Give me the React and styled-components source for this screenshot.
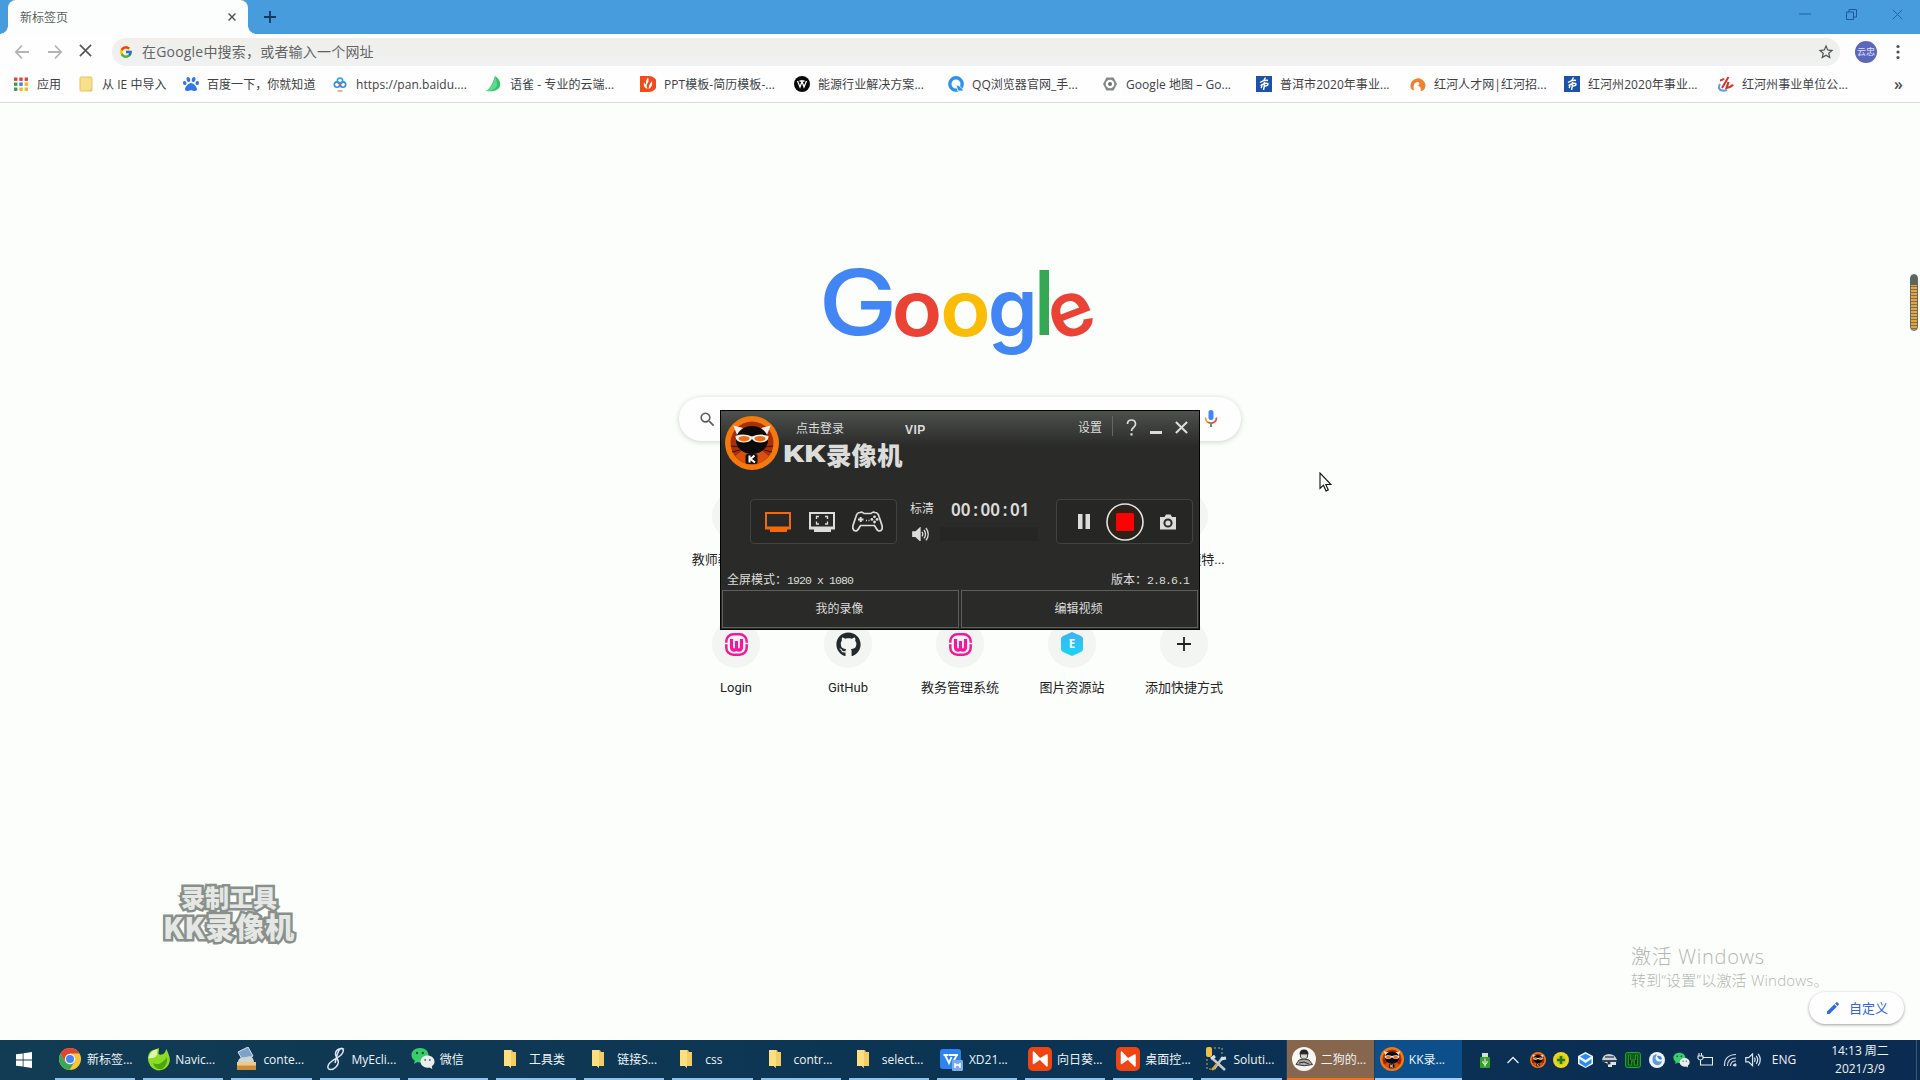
import React from "react";
import styled, { createGlobalStyle } from "styled-components";
import { FcGoogle } from "react-icons/fc";
import { FaGithub, FaPaw } from "react-icons/fa";
import { MdEdit, MdSearch, MdStarBorder } from "react-icons/md";

const Global = createGlobalStyle`
  * { box-sizing: border-box; }
  html, body { margin: 0; padding: 0; background: #fcfefb; overflow: hidden; }
  body { font-family: "Open Sans", "Noto Sans CJK SC", sans-serif; }
  svg { display: block; flex: none; }
`;

const Desktop = styled.div`
  position: relative;
  width: 1920px;
  height: 1080px;
  display: flex;
  flex-direction: column;
  background: #fcfefb;
  overflow: hidden;
`;

/* ---------- browser chrome ---------- */

const TabStrip = styled.header`
  height: 34px;
  background: #479cde;
  display: flex;
  align-items: center;
  padding-left: 8px;
`;
const Tab = styled.div`
  position: relative;
  width: 240px;
  height: 34px;
  border-radius: 8px 8px 0 0;
  background: #fcfefd;
  display: flex;
  align-items: center;
  justify-content: space-between;
  padding: 0 12px 0 12px;
  font-size: 12px;
  color: #5b5e60;
  &::before, &::after {
    content: "";
    position: absolute;
    bottom: 0;
    width: 8px;
    height: 8px;
  }
  &::before { left: -8px; background: radial-gradient(circle at 0 0, #479cde 7.5px, #fcfefd 8px); }
  &::after { right: -8px; background: radial-gradient(circle at 100% 0, #479cde 7.5px, #fcfefd 8px); }
`;
const NewTab = styled.div`
  margin-left: 16px;
  margin-top: -1px;
`;
const WindowControls = styled.div`
  margin-left: auto;
  margin-right: 17px;
  margin-bottom: 6px;
  width: 104px;
  display: flex;
  justify-content: space-between;
  align-items: center;
`;
const Toolbar = styled.div`
  height: 36px;
  display: flex;
  align-items: center;
  padding: 0 20px 0 14px;
  background: #fdfefd;
`;
const NavButtons = styled.div`
  display: flex;
  gap: 16.5px;
  width: 98px;
`;
const Omnibox = styled.div`
  flex: 1;
  height: 28px;
  border-radius: 14px;
  background: linear-gradient(#f1efec, #eff0ed 40%, #f0f1f2);
  display: flex;
  align-items: center;
  padding: 0 5px 0 7px;
  font-size: 14px;
  line-height: 20px;
  color: #626466;
`;
const OmniText = styled.span`
  flex: 1;
  margin-left: 9px;
  letter-spacing: 0.2px;
`;
const Avatar = styled.div`
  width: 22px;
  height: 22px;
  margin: 0 19px 0 15px;
  border-radius: 50%;
  background: #5c66ba;
  color: #dfe2f8;
  font-size: 9px;
  line-height: 22px;
  text-align: center;
`;
const Bookmarks = styled.nav`
  height: 33px;
  padding: 0 17px 4px 13px;
  border-bottom: 1px solid #d9dcda;
  display: flex;
  align-items: center;
  background: #fdfefd;
`;
const Bookmark = styled.div`
  width: ${(p) => p.$w || 154}px;
  display: flex;
  align-items: center;
  gap: 8px;
  font-size: 12px;
  line-height: 18px;
  color: #3d4145;
  white-space: nowrap;
`;
const BookmarkText = styled.span`
  padding-top: 2px;
  letter-spacing: 0.05px;
`;
const More = styled.span`
  margin-left: auto;
  font: 600 16px/18px "Open Sans", sans-serif;
  color: #4c4f52;
`;

/* ---------- new tab page ---------- */

const Page = styled.main`
  flex: 1;
  display: flex;
  flex-direction: column;
  align-items: center;
`;
const LogoArea = styled.div`
  height: 294px;
  padding-top: 127px;
`;
const SearchBox = styled.div`
  width: 562px;
  height: 44px;
  border-radius: 22px;
  background: #fdfefd;
  box-shadow: 0 1px 5px rgba(60, 64, 67, 0.24);
  display: flex;
  align-items: center;
  justify-content: space-between;
  padding: 0 23px 0 19px;
`;
const Shortcuts = styled.div`
  margin-top: 51px;
  display: grid;
  grid-template-columns: repeat(5, 112px);
  grid-auto-rows: 128px;
`;
const Shortcut = styled.div`
  display: flex;
  flex-direction: column;
  align-items: center;
`;
const Tile = styled.div`
  width: 48px;
  height: 48px;
  border-radius: 50%;
  background: #f3f5f3;
  display: flex;
  align-items: center;
  justify-content: center;
`;
const Label = styled.div`
  margin-top: 10px;
  height: 20px;
  padding-left: ${(p) => p.$shift || 0}px;
  font: 13px/20px Roboto, "Noto Sans CJK SC", sans-serif;
  color: #222426;
  white-space: nowrap;
`;
const Customize = styled.div`
  position: absolute;
  left: 1809px;
  top: 992px;
  width: 95px;
  height: 32px;
  border-radius: 16px;
  background: #fdfefd;
  box-shadow: 0 1px 3px rgba(40, 44, 47, 0.45);
  display: flex;
  align-items: center;
  gap: 8px;
  padding-left: 16px;
  font-size: 13px;
  line-height: 20px;
  color: #2f66dc;
`;
const ActivateNote = styled.div`
  position: absolute;
  left: 1631px;
  top: 944px;
  color: #b4b6b4;
  font-weight: 300;
  white-space: nowrap;
`;
const NoteTitle = styled.div`
  font-size: 20px;
  line-height: 26px;
  letter-spacing: 0.7px;
`;
const NoteText = styled.div`
  font-size: 15px;
  line-height: 21px;
  letter-spacing: 0.2px;
`;
const Watermark = styled.div`
  position: absolute;
  left: 159px;
  top: 882px;
  width: 140px;
  display: flex;
  flex-direction: column;
  align-items: center;
  font-family: "Noto Sans CJK SC", sans-serif;
  font-weight: 900;
  color: #e5e7e5;
  -webkit-text-stroke: 5px #89908b;
  stroke-linejoin: round;
  paint-order: stroke fill;
  white-space: nowrap;
`;
const MarkLine = styled.div`
  font-size: ${(p) => p.$size}px;
  line-height: ${(p) => p.$lh}px;
  letter-spacing: ${(p) => p.$ls || 0}px;
`;
const Gauge = styled.div`
  position: absolute;
  left: 1910px;
  top: 274px;
  width: 8px;
  height: 57px;
  border-radius: 4px;
  border: 1.5px solid #626a62;
  background: linear-gradient(#5c665e 10px, transparent 10px),
    repeating-linear-gradient(#e8a33c 0 2px, #79705a 2px 3px);
`;
const Cursor = styled.svg`
  position: absolute;
  left: 1319px;
  top: 472px;
`;

/* ---------- recorder window ---------- */

const Recorder = styled.section`
  position: absolute;
  left: 720px;
  top: 410px;
  width: 480px;
  height: 220px;
  border: 1px solid #030403;
  background: linear-gradient(#4e504e, #3f413f 14px, #2a2b29 36px);
  color: #dcdddb;
  font: 12px/16px "Liberation Mono", "Noto Sans CJK SC", monospace;
  display: flex;
  flex-direction: column;
`;
const RecHeader = styled.div`
  height: 88px;
  display: flex;
  padding: 5px 11px 0 4px;
`;
const HeaderMain = styled.div`
  flex: 1;
  padding: 6px 0 0 4px;
`;
const HeaderTop = styled.div`
  display: flex;
  height: 16px;
  padding-left: 13px;
`;
const Vip = styled.span`
  margin-left: 61px;
  font: bold 12px/17px "Liberation Sans", sans-serif;
  letter-spacing: 0.4px;
`;
const Brand = styled.div`
  height: 30px;
  margin-top: 1px;
  display: flex;
  align-items: center;
  font: 900 25.500px/30px "Noto Sans CJK SC", sans-serif;
  white-space: nowrap;
`;
const BrandKK = styled.span`
  font-family: Roboto, sans-serif;
  font-weight: 900;
  font-size: 24px;
  display: inline-block;
  transform: scaleX(1.38);
  transform-origin: left;
  width: 43px;
`;
const HeaderTools = styled.div`
  display: flex;
  height: 24px;
  align-items: center;
`;
const ToolText = styled.span`
  padding-top: 2px;
`;
const Divider = styled.i`
  width: 1px;
  height: 20px;
  background: #656765;
  margin: 0 13px 4px 10px;
`;
const HeaderIcons = styled.div`
  display: flex;
  align-items: center;
  gap: 13px;
  padding-bottom: 2px;
`;
const Controls = styled.div`
  height: 45px;
  padding: 0 5px 0 29px;
  display: flex;
`;
const ModeBox = styled.div`
  width: ${(p) => p.$w}px;
  border: 1px solid #41433f;
  border-radius: 4px;
  background: #262725;
  display: flex;
  align-items: center;
  justify-content: space-between;
  padding: ${(p) => p.$pad};
`;
const Status = styled.div`
  width: 159px;
  padding: 1px 0 1px 13px;
  display: flex;
  flex-direction: column;
  justify-content: space-between;
`;
const StatusRow = styled.div`
  display: flex;
  align-items: center;
  height: ${(p) => p.$h}px;
  padding-left: ${(p) => p.$indent || 0}px;
`;
const Timer = styled.span`
  margin-left: 17px;
  font: 600 17px/20px "Noto Sans", sans-serif;
  letter-spacing: 0.05px;
`;
const Colon = styled.span`
  margin: 0 2.600px;
`;
const Level = styled.div`
  width: 98px;
  height: 14px;
  margin-left: 11px;
  background: #262725;
`;
const Info = styled.div`
  margin-top: 29px;
  height: 17px;
  display: flex;
  justify-content: space-between;
  padding: 0 10px 0 6px;
`;
const Mono = styled.span`
  font-size: 11.500px;
  letter-spacing: -0.9px;
`;
const RecButtons = styled.div`
  margin: 0 1px 1px;
  flex: 1;
  display: flex;
  gap: 2px;
`;
const RecButton = styled.div`
  flex: 1;
  border: 1px solid #5d5f5c;
  display: flex;
  align-items: center;
  justify-content: center;
  padding: 2px 2px 0 0;
`;

/* ---------- taskbar ---------- */

const Taskbar = styled.footer`
  height: 40px;
  display: flex;
  background: linear-gradient(90deg, #123b54, #0c3653 40%, #0a3054 75%, #0b2b50);
  color: #eef4f8;
  font-size: 12px;
  line-height: 16px;
`;
const Start = styled.div`
  width: 51px;
  display: flex;
  align-items: center;
  padding-left: 16px;
`;
const Task = styled.div`
  width: 88.200px;
  padding: ${(p) => (p.$bg ? "0 0 0 3px" : "0 4px")};
  background: ${(p) => p.$bg || "transparent"};
  border-left: ${(p) => (p.$bg ? "1px solid #14416b" : "0")};
`;
const TaskInner = styled.div`
  height: 40px;
  display: flex;
  align-items: center;
  padding-left: 3px;
  border-bottom: 2px solid ${(p) => p.$line || "#8fc3ea"};
  ${(p) => p.$wide && "margin-left: -3px; padding-left: 5px;"}
  white-space: nowrap;
`;
const TaskIcon = styled.div`
  width: 24px;
  display: flex;
  justify-content: center;
  padding-right: ${(p) => (p.$folder ? 2 : 0)}px;
`;
const TaskText = styled.span`
  margin-left: ${(p) => (p.$folder ? 6 : 5)}px;
  padding-top: 2px;
`;
const Tray = styled.div`
  flex: 1;
  display: flex;
  align-items: center;
  padding-left: 10px;
`;
const TraySlot = styled.div`
  width: ${(p) => p.$w || 24}px;
  display: flex;
  justify-content: center;
`;
const Clock = styled.div`
  margin-left: 21px;
  width: 68px;
  text-align: center;
  line-height: 18px;
`;
const TrayEnd = styled.i`
  width: 1px;
  height: 40px;
  margin-left: auto;
  margin-right: 3px;
  background: #3c5875;
`;

/* ---------- drawings ---------- */

const Cross = ({ s, c, w = 1.5 }) => (
  <svg width={s} height={s} viewBox="0 0 10 10" stroke={c} strokeWidth={w} fill="none">
    <path d="M.7.7l8.6 8.6M9.3.7L.7 9.3" />
  </svg>
);
const Arrow = ({ flip }) => (
  <svg width="16" height="16" viewBox="0 0 16 16" fill="none" stroke="#b3b5b5" strokeWidth="1.8">
    <path d={flip ? "M1 8h13M8 1.500L14.200 8 8 14.500" : "M15 8H2M8 1.500L1.800 8 8 14.500"} />
  </svg>
);
const Folder = () => (
  <svg width="14" height="20" viewBox="0 0 14 20">
    <path d="M1 1h8l1 2h3v14H1z" fill="#e5b84c" />
    <path d="M1 1h7v18l-2-2H1z" fill="#fbdf82" />
    <path d="M8 3h5v14H6l2 2z" fill="#f3cd62" />
  </svg>
);
const appColors = ["#e3423a", "#e3423a", "#e3423a", "#3a9d54", "#3b7fe0", "#f3b32b", "#3a9d54", "#f3b32b", "#f3b32b"];
const AppsIcon = () => (
  <svg width="16" height="16" viewBox="0 0 16 16">
    {appColors.map((c, i) => (
      <rect key={i} x={1 + (i % 3) * 5.3} y={1.5 + Math.floor(i / 3) * 5} width="3.4" height="3.4" fill={c} />
    ))}
  </svg>
);
const YellowFolder = () => (
  <svg width="16" height="16" viewBox="0 0 16 16">
    <rect x="2" y="1" width="12" height="14" rx="1" fill="#f8df8b" stroke="#e6c562" />
    <path d="M11 15l3-3v3z" fill="#e6c562" />
  </svg>
);
const PanIcon = () => (
  <svg width="16" height="16" viewBox="0 0 16 16" fill="none" strokeWidth="1.6">
    <circle cx="8" cy="4.800" r="2.700" stroke="#34a8f0" />
    <circle cx="5" cy="8.600" r="2.700" stroke="#2f8fe8" />
    <circle cx="11" cy="8.600" r="2.700" stroke="#2f8fe8" />
    <path d="M6.500 7l2.800 2.600" stroke="#e6574e" />
    <path d="M5.500 15h5" stroke="#e6574e" strokeWidth="1" />
  </svg>
);
const LeafIcon = () => (
  <svg width="16" height="16" viewBox="0 0 16 16">
    <path d="M9 0c3 2 6 5 5 10-1 4-6 6-14 5C5 12 7 6 9 0z" fill="#35c36a" />
    <path d="M9 0c-1 7-4 12-9 15 6 0 10-2 11-6 0-3-1-6-2-9z" fill="#5fd98a" />
  </svg>
);
const PptIcon = () => (
  <svg width="16" height="16" viewBox="0 0 16 16">
    <path d="M0 0h9a8 8 0 010 16H0z" fill="#f14a1f" />
    <path d="M8 1.500q1.500 4-1 6.500-1 2 .5 5Q3 11.500 4 6q.8 2 2 2.500Q5.500 4 8 1.500zM12 5q1 6-3.500 8Q9 8 12 5z" fill="#fff" />
  </svg>
);
const BlackW = () => (
  <svg width="16" height="16" viewBox="0 0 16 16">
    <circle cx="8" cy="8" r="8" fill="#090909" />
    <path d="M3.500 5l2.500 6 2-5.500 2 5.500 2.500-6M5.500 5h5" fill="none" stroke="#fff" strokeWidth="1.300" />
  </svg>
);
const QQIcon = () => (
  <svg width="16" height="16" viewBox="0 0 16 16">
    <circle cx="8" cy="8" r="6.200" fill="none" stroke="#2e93ef" strokeWidth="3.400" />
    <path d="M8 9c3 0 5 2 8 6h-6z" fill="#2e93ef" stroke="#fff" strokeWidth=".8" />
  </svg>
);
const MapIcon = () => (
  <svg width="16" height="16" viewBox="0 0 16 16">
    <path d="M4.500 1.500h7L15 8l-3.500 6.500h-7L1 8z" fill="#858887" />
    <circle cx="8" cy="8" r="4.300" fill="#fff" />
    <circle cx="8" cy="8" r="2" fill="#6f7271" />
  </svg>
);
const ExamIcon = () => (
  <svg width="16" height="16" viewBox="0 0 16 16" fill="none" stroke="#fff" strokeWidth="1.400">
    <rect width="16" height="16" fill="#1c53a8" stroke="none" />
    <path d="M9.500 1.500L7.500 5M4 6.500q5-3 8-2M4.500 9.500q6-3.500 7.500-1.500 0 2-3 2M8.500 6q0 5-1 8M6 8q0 3-1 4" />
  </svg>
);
const TalentIcon = () => (
  <svg width="16" height="16" viewBox="0 0 16 16">
    <path d="M1 12.500A7.500 7.500 0 1115.500 10q-.5 3-2.500 4.500L10.500 15c1-3-.5-5-3.500-6 3 0 3-2 1-3-4 0-5 4-4 8.500Q1.500 14 1 12.500z" fill="#f0802f" />
  </svg>
);
const RedLogo = () => (
  <svg width="16" height="16" viewBox="0 0 16 16" fill="none" strokeWidth="2">
    <path d="M2 8c-3 5 1 8 7 6" stroke="#55a4e0" />
    <path d="M10.500 1L4 12M2 4.500Q5 4 6 2.500" stroke="#d93129" />
    <path d="M10.500 6L8.500 12q5-1 6.500-3.500" stroke="#d93129" strokeWidth="2.200" />
  </svg>
);
const GoogleMark = () => {
  const f = { fontFamily: "Inter, sans-serif", fontWeight: 500 };
  const b = { fontFamily: "Inter, sans-serif", fontWeight: 600 };
  return (
    <svg width="320" height="160" viewBox="800 230 320 160">
      <text transform="translate(818.600 335) scale(1.150 .99)" style={f} fontSize="92" fill="#4285f4">G</text>
      <text transform="translate(891.800 335.600) scale(1.010 .95)" style={b} fontSize="82" fill="#ea4335">o</text>
      <text transform="translate(940.300 335.600) scale(1.010 .95)" style={b} fontSize="82" fill="#fbbc05">o</text>
      <text transform="translate(987.800 337) scale(1 1.020)" style={b} fontSize="80" fill="#4285f4">g</text>
      <rect x="1039.500" y="270" width="9.500" height="65" fill="#34a853" />
      <text transform="translate(1057.500 342.500) rotate(-21) scale(.96 .96)" style={b} fontSize="80" fill="#ea4335">e</text>
    </svg>
  );
};
const WampIcon = () => (
  <svg width="23" height="23" viewBox="0 0 23 23" fill="none" stroke="#f01a9c">
    <rect x="1.300" y="1.300" width="20.400" height="20.400" rx="7" strokeWidth="2.500" />
    <path d="M0 10.500h3M20 10.500h3" stroke="#fff" strokeWidth="1.500" />
    <path d="M6.500 6v8c0 4 4.500 4 5 1V8v7c.5 3 5 3 5-1V6" strokeWidth="3.200" />
  </svg>
);
const HexE = () => (
  <svg width="24" height="24" viewBox="0 0 24 24">
    <defs>
      <linearGradient id="hexFill" x1="0" y1="0" x2="0" y2="1">
        <stop offset="0" stopColor="#3fb2f3" />
        <stop offset="1" stopColor="#19d5f4" />
      </linearGradient>
    </defs>
    <path d="M12 0l9 4q2 1 2 3v10q0 2-2 3l-9 4-9-4q-2-1-2-3V7q0-2 2-3z" fill="url(#hexFill)" />
    <text x="12" y="16" textAnchor="middle" fontFamily="Open Sans, sans-serif" fontWeight="700" fontSize="11.500" fill="#fff">E</text>
  </svg>
);
const PlusIcon = ({ s, w, c }) => (
  <svg width={s} height={s} viewBox="0 0 14 14" stroke={c} strokeWidth={w}>
    <path d="M7 0v14M0 7h14" />
  </svg>
);
const KKCat = ({ s }) => (
  <svg width={s} height={s} viewBox="0 0 54 54">
    <circle cx="27" cy="27" r="27" fill="#f4790f" />
    <circle cx="27" cy="27" r="21.500" fill="#a92f06" />
    <path d="M10 40a21 21 0 0034 0l-8-6H18z" fill="#d9500c" />
    <path d="M6 30l9 1M7 36l8-2M48 30l-9 1M47 36l-8-2" stroke="#3a1305" />
    <path d="M9.500 10.500l4 10 7-7z" fill="#f4eee8" stroke="#f4eee8" strokeWidth="1.500" />
    <path d="M44.500 10.500l-4 10-7-7z" fill="#f4eee8" stroke="#f4eee8" strokeWidth="1.500" />
    <ellipse cx="27" cy="24" rx="16" ry="14" fill="#0c0b0a" />
    <path d="M10.500 20q8-3 16.500 .5 8.500-3.500 16.500-.5 0 6.500-8 6.500-6 0-8.500-3.500-2.500 3.500-8.500 3.500-8 0-8-6.500z" fill="#f4f0ec" />
    <ellipse cx="19" cy="22.700" rx="5.500" ry="2.700" fill="#f46a0c" />
    <ellipse cx="35" cy="22.700" rx="5.500" ry="2.700" fill="#f46a0c" />
    <rect x="20.500" y="38" width="12" height="10" rx="2" fill="#15100d" />
    <path d="M24.500 39.500v7M29.500 39.500L25.500 43l4.500 3.500" fill="none" stroke="#fff" strokeWidth="2" />
  </svg>
);
const Monitor = ({ c, corners }) => (
  <svg width="26" height="20" viewBox="0 0 26 20">
    <path d="M0 0h26v17.500h-4V20H5v-2.500H0z" fill={c} />
    <rect x="2" y="2" width="22" height="12.500" fill="#282927" />
    {corners && (
      <path d="M7.500 7V4.500H10M16 4.500h2.500V7M18.500 9.500V12H16M10 12H7.500V9.500" fill="none" stroke={c} strokeWidth="1.300" />
    )}
  </svg>
);
const Gamepad = () => (
  <svg width="31" height="21" viewBox="0 0 31 21" fill="none" stroke="#dcdddb" strokeWidth="1.700">
    <path d="M8 1.500q2-1 4 1h7q2-2 4-1 3 0 4 4l3 9q1 5-2.500 5.500-2 0-3.500-3l-1.500-2.500h-14L7 17q-1.500 3-3.500 3Q0 19 1 14.500l3-9q1-4 4-4z" />
    <path d="M6 8.500h5.500M8.700 6v5" strokeWidth="2" />
    <path d="M14 9.500h1M16.500 9.500h1" />
    <g fill="#dcdddb" stroke="none">
      <circle cx="22.500" cy="5.800" r="1.400" /><circle cx="22.500" cy="11" r="1.400" />
      <circle cx="19.900" cy="8.400" r="1.400" /><circle cx="25.100" cy="8.400" r="1.400" />
    </g>
  </svg>
);
const Speaker = ({ s = 17, c = "#dcdddb", outline }) => (
  <svg width={s} height={s * 0.85} viewBox="0 0 17 14.500" fill="none" stroke={c} strokeWidth="1.300">
    <path d="M.8 5h3L8 1v12.500L3.800 9.500h-3z" fill={outline ? "none" : c} />
    <path d="M10 5q1.500 2.200 0 4.500M12 3q3 4.200 0 8.500M14 1q4.500 6.200 0 12.500" />
  </svg>
);
const Pause = () => (
  <svg width="12" height="15" viewBox="0 0 12 15" fill="#dcdddb"><path d="M0 0h4.500v15H0zM7.500 0H12v15H7.500z" /></svg>
);
const StopButton = () => (
  <svg width="38" height="38" viewBox="0 0 38 38">
    <circle cx="19" cy="19" r="18" fill="#2c2218" stroke="#dfe5e2" strokeWidth="1.600" />
    <rect x="10" y="10" width="18" height="18" rx="1.500" fill="#fd0202" />
  </svg>
);
const Camera = () => (
  <svg width="18" height="16" viewBox="0 0 18 16">
    <path d="M1 3h4.500L7 .5h4.500L13 3h4v12.500H1z" fill="#dcdddb" />
    <circle cx="9" cy="9" r="3.600" fill="none" stroke="#2b2c2a" strokeWidth="2" />
  </svg>
);
const WeChat = ({ s }) => (
  <svg width={s} height={s} viewBox="0 0 24 24">
    <path d="M9 1c5 0 8.500 3 8.500 7S14 15.500 9 15.500q-1.500 0-2.500-.4L3 17l.8-3.200Q.5 11.500.5 8C.5 4 4 1 9 1z" fill="#36cf6c" />
    <circle cx="6" cy="6" r="1.200" fill="#0f5c33" /><circle cx="11.800" cy="6" r="1.200" fill="#0f5c33" />
    <path d="M16.500 8.500c4 0 7 2.700 7 6 0 2-1 3.700-2.700 4.800l.5 2.700-2.800-1.500q-1 .2-2 .2c-4 0-7-2.700-7-6.100s3-6.100 7-6.100z" fill="#e9efec" />
    <circle cx="14.200" cy="13" r="1" fill="#68716d" /><circle cx="18.800" cy="13" r="1" fill="#68716d" />
  </svg>
);
const ChromeIcon = () => (
  <svg width="22" height="22" viewBox="0 0 22 22">
    <circle cx="11" cy="11" r="11" fill="#f9c634" />
    <path d="M1.500 5.500A11 11 0 0120.500 5.500H11L6.200 13.700z" fill="#e04335" />
    <path d="M1.500 5.500A11 11 0 0010.500 22l5-8.200H6.200z" fill="#3aa656" />
    <circle cx="11" cy="11" r="5.200" fill="#f5f7f8" />
    <circle cx="11" cy="11" r="4" fill="#4285f4" />
  </svg>
);
const Navicat = () => (
  <svg width="23" height="23" viewBox="0 0 23 23">
    <path d="M1 9Q2 2 8 1.500L12 0l-.5 6q3 2 6-1l2-4 2 5q4 9-4 15-8 4-14-3-3-4-2.500-9z" fill="#8edb26" />
    <path d="M1.500 10q2-8 9-9l-.5 6q-3 4-8.500 3z" fill="#dcf7ad" />
    <path d="M6 15q7 4 14-6 1 8-5 12-7 1-9-6z" fill="#49a80e" />
  </svg>
);
const Conte = () => (
  <svg width="21" height="24" viewBox="0 0 21 24">
    <path d="M2 5l10-5 5 9-10 5z" fill="#7ba3c8" stroke="#d6e3ec" />
    <path d="M2 15q0-5 8-5 7-3 8 5z" fill="#cfd5d4" />
    <path d="M1 15h19v8H1z" fill="#c98d3e" />
    <path d="M1 15h19v3.500H1z" fill="#f0c888" />
  </svg>
);
const MyEclipse = () => (
  <svg width="22" height="24" viewBox="0 0 22 24" fill="none" stroke="#dde6f4" strokeWidth="1.500">
    <path d="M20 2c-5-2-10 2-8 7 2 4 4 7 0 11-4 4-9 3-8-1 1-5 9-7 13-11 4-4 2-8-1-6-3 3-4 11-5 14" />
  </svg>
);
const WpsIcon = () => (
  <svg width="23" height="23" viewBox="0 0 23 23">
    <rect x="0" y="1" width="21" height="20" rx="3" fill="#2f83ee" />
    <path d="M3.500 7h5M5 7l4 8 2.500-6M9 7h9M17 7l-3.500 6" stroke="#fff" strokeWidth="1.800" fill="none" />
    <rect x="12" y="12" width="11" height="11" rx="1" fill="#79a9ee" />
    <path d="M15 15v5M20 15v5M15 18l2.500-1.500L20 18" stroke="#fff" strokeWidth="1.500" fill="none" />
  </svg>
);
const Sunlogin = () => (
  <svg width="24" height="24" viewBox="0 0 24 24">
    <rect width="24" height="24" rx="5" fill="#ee4512" />
    <path d="M5.500 5v11.500L12 12zM19 8v11l-7-7z" fill="#fff" stroke="#fff" strokeWidth="1.500" strokeLinejoin="round" />
  </svg>
);
const ToolsIcon = () => (
  <svg width="22" height="24" viewBox="0 0 22 24" fill="none">
    <rect x="1" y="0" width="6" height="10" rx="2" fill="#efc045" />
    <path d="M9 1h8v8M2 12v10h7" stroke="#b7b45c" strokeDasharray="2 2" />
    <path d="M8 12l12 11M18 10L9 22" stroke="#c3ccd2" strokeWidth="2.500" />
    <path d="M6 12l4-3M16 12l5-1" stroke="#dce3e6" strokeWidth="3" />
    <path d="M12 17l-5 6" stroke="#dda534" strokeWidth="2.500" />
  </svg>
);
const Portrait = () => (
  <svg width="24" height="24" viewBox="0 0 24 24">
    <circle cx="12" cy="12" r="12" fill="#f7f6f3" />
    <path d="M7.500 7.500q0-5 4.500-5t4.500 5z" fill="#262523" />
    <path d="M8.500 7h7v3q-3.500 5-7 0z" fill="#d7d4d0" stroke="#45423f" />
    <path d="M4 17.500l3-4.500q5-2 10 0l3.500 4.500q-8 2.500-16.500 0z" fill="#a9a7a4" stroke="#3a3937" />
    <path d="M7 16l5-1 5 2" stroke="#2c2b2a" fill="none" />
  </svg>
);
const WinLogo = () => (
  <svg width="16" height="16" viewBox="0 0 16 16" fill="#fff">
    <path d="M0 2.300L6.700 1.400V7.600H0zM7.500 1.300L16 0v7.600H7.500zM0 8.400h6.700v6.200L0 13.700zM7.500 8.400H16V16l-8.500-1.300z" />
  </svg>
);
const Usb = () => (
  <svg width="10" height="15" viewBox="0 0 10 15">
    <rect x="2" y="0" width="6" height="4" fill="#d8dcd8" />
    <rect x="0" y="4" width="10" height="11" rx="1" fill="#34a02c" />
    <path d="M5 5.500v8M3 8v2l2 1.500L7 10V8" stroke="#fff" fill="none" />
  </svg>
);
const Chevron = () => (
  <svg width="12" height="8" viewBox="0 0 12 8" fill="none" stroke="#e7edf2" strokeWidth="1.300">
    <path d="M.5 7L6 1.500 11.500 7" />
  </svg>
);
const PlusBall = () => (
  <svg width="16" height="16" viewBox="0 0 16 16">
    <circle cx="8" cy="8" r="8" fill="#f0d51e" />
    <circle cx="8" cy="8" r="5.200" fill="#d2cf16" />
    <path d="M8 4v8M4 8h8" stroke="#23781e" strokeWidth="2.600" />
  </svg>
);
const BlueBox = () => (
  <svg width="15" height="16" viewBox="0 0 15 16">
    <path d="M7.500 0L15 4v8l-7.500 4L0 12V4z" fill="#f1f7fd" />
    <path d="M2 4.500L7.500 1.800 13 4.500 7.500 8z" fill="#2a8cec" />
    <path d="M1.500 7l6 4 6-4v4l-6 4-6-4z" fill="#2a8cec" />
  </svg>
);
const Printer = () => (
  <svg width="17" height="15" viewBox="0 0 17 15">
    <path d="M1 7Q2 1 8 1t8 6z" fill="#c9cfd4" />
    <path d="M4 4h9M1 8h15M6 11h8" stroke="#43505c" strokeWidth="1.700" />
    <path d="M3 9h12v3h-4v2H7v-3z" fill="#dfe4e7" />
    <circle cx="8" cy="10" r="1.600" fill="#26303a" />
  </svg>
);
const GreenSquare = () => (
  <svg width="16" height="16" viewBox="0 0 16 16">
    <rect x=".5" y=".5" width="15" height="15" rx="2" fill="#0b5f1c" stroke="#2ba12f" />
    <path d="M3.500 3v10h3V9h3v4h3V3h-2v5h-5V3z" fill="#0a2e18" stroke="#37a83a" strokeWidth=".7" />
  </svg>
);
const Swirl = () => (
  <svg width="16" height="16" viewBox="0 0 16 16">
    <circle cx="8" cy="8" r="8" fill="#eef4fb" />
    <path d="M4 4Q7 1 8 3 5 6 8 9q3 1 5 0-1 5-6 4-5-2-3-9z" fill="#5d9ae3" />
    <path d="M8 4q4-1 5 3-3 2-5-3z" fill="#3b85dc" />
  </svg>
);
const Battery = () => (
  <svg width="16" height="14" viewBox="0 0 16 14" fill="none" stroke="#e7edf2" strokeWidth="1.100">
    <path d="M5.500 4.500h10v7.500H5.500M2 0v3M4.500 0v3M1 3h5v2.500q-1 1.500-2.500 1.500Q2 7 1 5.500zM3.500 7v5H6" />
  </svg>
);
const Wifi = () => (
  <svg width="14" height="14" viewBox="0 0 14 14" fill="none" stroke="#cfd9e2" strokeWidth="1.200">
    <path d="M1.500 13Q1 2 13 1.500M4.500 13q0-8 8.500-8M7.500 13q0-5 5.500-5M10.500 13q0-2 2.500-2" />
    <circle cx="12" cy="12" r="1" fill="#fff" />
  </svg>
);

/* ---------- data ---------- */

const bookmarks = [
  { icon: <AppsIcon />, text: "应用", w: 65 },
  { icon: <YellowFolder />, text: "从 IE 中导入", w: 105 },
  { icon: <FaPaw size={16} color="#3577e5" />, text: "百度一下，你就知道", w: 149 },
  { icon: <PanIcon />, text: "https://pan.baidu....", w: 154 },
  { icon: <LeafIcon />, text: "语雀 - 专业的云端...", w: 154 },
  { icon: <PptIcon />, text: "PPT模板-简历模板-..." },
  { icon: <BlackW />, text: "能源行业解决方案..." },
  { icon: <QQIcon />, text: "QQ浏览器官网_手..." },
  { icon: <MapIcon />, text: "Google 地图 – Go..." },
  { icon: <ExamIcon />, text: "普洱市2020年事业..." },
  { icon: <TalentIcon />, text: "红河人才网|红河招..." },
  { icon: <ExamIcon />, text: "红河州2020年事业..." },
  { icon: <RedLogo />, text: "红河州事业单位公..." },
];

const tasks = [
  { icon: <ChromeIcon />, text: "新标签..." },
  { icon: <Navicat />, text: "Navic..." },
  { icon: <Conte />, text: "conte..." },
  { icon: <MyEclipse />, text: "MyEcli..." },
  { icon: <WeChat s={24} />, text: "微信" },
  { folder: true, text: "工具类" },
  { folder: true, text: "链接S..." },
  { folder: true, text: "css" },
  { folder: true, text: "contr..." },
  { folder: true, text: "select..." },
  { icon: <WpsIcon />, text: "XD21..." },
  { icon: <Sunlogin />, text: "向日葵..." },
  { icon: <Sunlogin />, text: "桌面控..." },
  { icon: <ToolsIcon />, text: "Soluti..." },
  { icon: <Portrait />, text: "二狗的...", bg: "#86664c", line: "#f4701c" },
  { icon: <KKCat s={24} />, text: "KK录...", bg: "#0d4f8b", line: "#a5cdf0" },
];

const shortcuts = [
  { text: "教师教务管理..." },
  {}, {}, {},
  { text: "汉密尔顿特...", shift: 6 },
  { icon: <WampIcon />, text: "Login" },
  { icon: <FaGithub size={25} color="#24292b" />, text: "GitHub" },
  { icon: <WampIcon />, text: "教务管理系统" },
  { icon: <HexE />, text: "图片资源站" },
  { icon: <PlusIcon s={14} w={1.8} c="#202224" />, text: "添加快捷方式" },
];

const trayIcons = [
  [<Usb />, 26],
  [<Chevron />, 30],
  [<KKCat s={16} />, 20],
  [<PlusBall />, 26],
  [<BlueBox />, 23],
  [<Printer />, 24],
  [<GreenSquare />, 24],
  [<Swirl />, 24],
  [<WeChat s={17} />, 24],
  [<Battery />, 24],
  [<Wifi />, 26],
  [<Speaker s={16} c="#dbe4ec" outline />, 20],
];

export default function App() {
  return (
    <Desktop>
      <Global />
      <TabStrip>
        <Tab>新标签页<Cross s={8} c="#4c5053" w={1.7} /></Tab>
        <NewTab><PlusIcon s={12} w={2.1} c="#15395a" /></NewTab>
        <WindowControls>
          <svg width="12" height="2"><path d="M0 1h12" stroke="#1c65ab" strokeWidth="1" /></svg>
          <svg width="11" height="11" viewBox="0 0 11 11" fill="none" stroke="#1c5a9b"><path d="M.5 3h7v7.500h-7zM3 3V.5h7.500V8H7.500" /></svg>
          <Cross s={11} c="#1c65ab" w={0.9} />
        </WindowControls>
      </TabStrip>
      <Toolbar>
        <NavButtons>
          <Arrow /><Arrow flip />
          <Cross s={13} c="#55585a" w={1.3} />
        </NavButtons>
        <Omnibox>
          <FcGoogle size={14} />
          <OmniText>在Google中搜索，或者输入一个网址</OmniText>
          <MdStarBorder size={18} color="#4e5153" />
        </Omnibox>
        <Avatar>云忠</Avatar>
        <svg width="4" height="16" viewBox="0 0 4 16" fill="#4f5254"><circle cx="2" cy="2.500" r="1.600" /><circle cx="2" cy="8" r="1.600" /><circle cx="2" cy="13.500" r="1.600" /></svg>
      </Toolbar>
      <Bookmarks>
        {bookmarks.map((b, i) => (
          <Bookmark key={i} $w={b.w}>{b.icon}<BookmarkText>{b.text}</BookmarkText></Bookmark>
        ))}
        <More>»</More>
      </Bookmarks>
      <Page>
        <LogoArea><GoogleMark /></LogoArea>
        <SearchBox>
          <MdSearch size={19} color="#5b5e60" />
          <svg width="14" height="20" viewBox="0 0 14 20" fill="none">
            <rect x="4.500" y="1" width="5" height="10" rx="2.500" fill="#4285f4" />
            <path d="M1.500 8.500q0 3 1.800 4.400" stroke="#f2a51c" strokeWidth="1.700" />
            <path d="M3.300 12.900Q7 15.500 10.500 13q2-1.500 2-4.500" stroke="#e94a3a" strokeWidth="1.700" />
            <path d="M7 14.500V18" stroke="#34a853" strokeWidth="1.900" />
          </svg>
        </SearchBox>
        <Shortcuts>
          {shortcuts.map((s, i) => (
            <Shortcut key={i}><Tile>{s.icon}</Tile><Label $shift={s.shift}>{s.text}</Label></Shortcut>
          ))}
        </Shortcuts>
      </Page>
      <Taskbar>
        <Start><WinLogo /></Start>
        {tasks.map((t, i) => (
          <Task key={i} $bg={t.bg}>
            <TaskInner $line={t.line} $wide={!!t.bg}>
              <TaskIcon $folder={t.folder}>{t.folder ? <Folder /> : t.icon}</TaskIcon>
              <TaskText $folder={t.folder}>{t.text}</TaskText>
            </TaskInner>
          </Task>
        ))}
        <Tray>
          {trayIcons.map(([icon, w], i) => <TraySlot key={i} $w={w}>{icon}</TraySlot>)}
          <TraySlot $w={42}>ENG</TraySlot>
          <Clock>14:13 周二<br />2021/3/9</Clock>
          <TrayEnd />
        </Tray>
      </Taskbar>

      <Watermark>
        <MarkLine $size={24} $lh={30}>录制工具</MarkLine>
        <MarkLine $size={29} $lh={28} $ls={0.8}>KK录像机</MarkLine>
      </Watermark>
      <ActivateNote>
        <NoteTitle>激活 Windows</NoteTitle>
        <NoteText>转到“设置”以激活 Windows。</NoteText>
      </ActivateNote>
      <Customize><MdEdit size={16} color="#2f6ce0" />自定义</Customize>
      <Gauge />

      <Recorder>
        <RecHeader>
          <KKCat s={54} />
          <HeaderMain>
            <HeaderTop>点击登录<Vip>VIP</Vip></HeaderTop>
            <Brand><BrandKK>KK</BrandKK>录像机</Brand>
          </HeaderMain>
          <HeaderTools>
            <ToolText>设置</ToolText>
            <Divider />
            <HeaderIcons>
              <svg width="11" height="17" viewBox="0 0 11 17" fill="none" stroke="#dcdddb" strokeWidth="1.700"><path d="M1.500 5Q1.500 1 5.500 1t4 4q0 2-2 3.500T5.500 12" /><path d="M5.500 14.300v2.200" strokeWidth="2.200" /></svg>
              <svg width="12" height="14"><path d="M0 12.500h12" stroke="#dcdddb" strokeWidth="3" /></svg>
              <Cross s={13} c="#dcdddb" w={1.6} />
            </HeaderIcons>
          </HeaderTools>
        </RecHeader>
        <Controls>
          <ModeBox $w={147} $pad="0 13px 0 14px">
            <Monitor c="#f46a0a" /><Monitor c="#dcdddb" corners /><Gamepad />
          </ModeBox>
          <Status>
            <StatusRow $h={20}>标清<Timer>00<Colon>:</Colon>00<Colon>:</Colon>01</Timer></StatusRow>
            <StatusRow $h={18} $indent={2}><Speaker /><Level /></StatusRow>
          </Status>
          <ModeBox $w={137} $pad="0 15px 0 21px"><Pause /><StopButton /><Camera /></ModeBox>
        </Controls>
        <Info>
          <span>全屏模式：<Mono>1920 x 1080</Mono></span>
          <span>版本：<Mono>2.8.6.1</Mono></span>
        </Info>
        <RecButtons><RecButton>我的录像</RecButton><RecButton>编辑视频</RecButton></RecButtons>
      </Recorder>

      <Cursor width="13" height="20" viewBox="0 0 13 20">
        <path d="M1 1v15.500l3.500-3.300L7 19l2.300-1-2.500-5.500H12z" fill="#fff" stroke="#111" strokeWidth="1.100" />
      </Cursor>
    </Desktop>
  );
}
